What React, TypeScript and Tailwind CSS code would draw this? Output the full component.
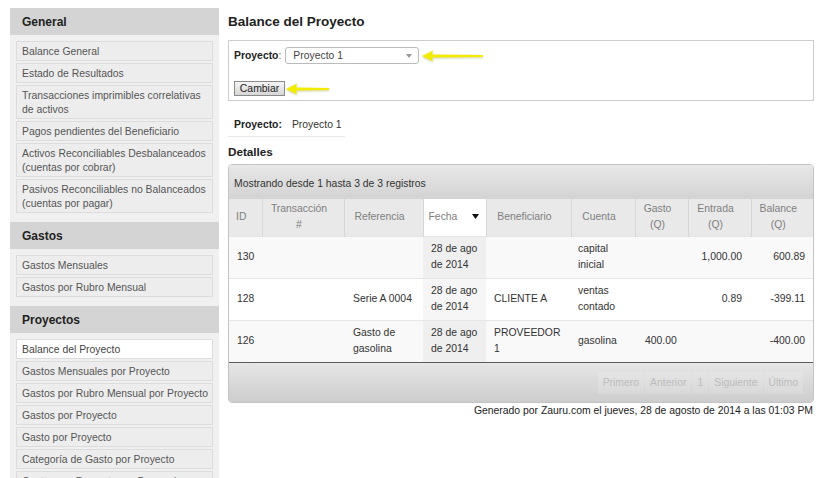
const sections = [
  {
    title: 'General',
    items: [
      'Balance General',
      'Estado de Resultados',
      'Transacciones imprimibles correlativas de activos',
      'Pagos pendientes del Beneficiario',
      'Activos Reconciliables Desbalanceados (cuentas por cobrar)',
      'Pasivos Reconciliables no Balanceados (cuentas por pagar)',
    ],
  },
  {
    title: 'Gastos',
    items: ['Gastos Mensuales', 'Gastos por Rubro Mensual'],
  },
  {
    title: 'Proyectos',
    items: [
      'Balance del Proyecto',
      'Gastos Mensuales por Proyecto',
      'Gastos por Rubro Mensual por Proyecto',
      'Gastos por Proyecto',
      'Gasto por Proyecto',
      'Categoría de Gasto por Proyecto',
      'Gastos por Proyecto por Proveedor',
    ],
  },
];

const rows = [
  { id: '130', ref: '', benef: '', cuenta: 'capital inicial', gasto: '', entrada: '1,000.00', balance: '600.89' },
  { id: '128', ref: 'Serie A 0004', benef: 'CLIENTE A', cuenta: 'ventas contado', gasto: '', entrada: '0.89', balance: '-399.11' },
  { id: '126', ref: 'Gasto de gasolina', benef: 'PROVEEDOR 1', cuenta: 'gasolina', gasto: '400.00', entrada: '', balance: '-400.00' },
];

function YellowArrow({ width }: { width: number }) {
  return (
    <svg width={width} height="14" viewBox={`0 0 ${width} 14`} className="shrink-0 drop-shadow-[0_1px_1px_rgba(120,120,0,0.35)]">
      <polygon points={`1,7 12,1.5 11,5.5 ${width - 2},6 ${width - 2},8 11,8.5 12,12.5`} fill="#f2ec00" />
    </svg>
  );
}

function Sidebar() {
  return (
    <aside className="w-[209px] shrink-0 bg-[#f0f0f0]">
      {sections.map((s) => (
        <div key={s.title}>
          <div className="flex h-[27px] items-center bg-[#d4d4d4] pl-3 text-[12px] font-bold text-[#222]">
            {s.title}
          </div>
          <ul className="flex flex-col gap-[2px] px-[6px] pt-[6px] pb-[9px]">
            {s.items.map((item) => (
              <li
                key={item}
                className={
                  item === 'Balance del Proyecto'
                    ? 'border border-[#dcdcdc] bg-white pl-[5px] pr-[2px] pt-[3px] pb-px text-[10.4px] leading-[14px] text-[#444]'
                    : 'border border-[#dcdcdc] bg-[#ededed] pl-[5px] pr-[2px] pt-[3px] pb-px text-[10.4px] leading-[14px] text-[#555]'
                }
              >
                {item}
              </li>
            ))}
          </ul>
        </div>
      ))}
    </aside>
  );
}

export default function App() {
  const th = 'border-x border-[#d8d8d8] pl-[4px] pr-[12px] text-center align-middle font-normal text-[#808080]';
  return (
    <div className="min-h-screen bg-white font-['Liberation_Sans',Arial,sans-serif] text-[10.4px] text-[#333]">
      <div className="flex items-start pt-2 pl-[10px]">
        <Sidebar />

        <main className="ml-[9px] w-[586px]">
          <h1 className="text-[13.5px] font-bold leading-[28px] text-[#222]">Balance del Proyecto</h1>

          {/* Form */}
          <div className="mt-[4px] border border-[#cccccc] pl-[5px] pt-[6px] pb-[4px]">
            <div className="flex h-[17px] items-center">
              <span className="font-bold text-[#222]">Proyecto</span>
              <span className="text-[#666]">:</span>
              <div className="ml-[4px] flex h-[17px] w-[134px] items-center justify-between rounded-[3px] border border-[#bbbbbb] bg-white pl-[7px] pr-[6px] text-[#444]">
                <span>Proyecto 1</span>
                <svg width="6" height="4" viewBox="0 0 6 4">
                  <polygon points="0,0 6,0 3,4" fill="#999" />
                </svg>
              </div>
              <div className="ml-[2px]">
                <YellowArrow width={64} />
              </div>
            </div>
            <div className="mt-[17px] flex items-center">
              <button className="h-[15px] w-[51px] border border-[#8a8a8a] bg-linear-to-b from-[#f5f5f5] to-[#d6d6d6] text-[10.4px] leading-[13px] text-[#222]">
                Cambiar
              </button>
              <YellowArrow width={46} />
            </div>
          </div>

          <div className="mt-[17px] w-[117px] border-b border-[#e8e8e8] pb-[4px] pl-[6px] leading-[14px]">
            <span className="font-bold text-[#222]">Proyecto:</span>
            <span className="ml-[10px]">Proyecto 1</span>
          </div>

          <h2 className="mt-[7px] text-[11.7px] font-bold leading-[16px] text-[#222]">Detalles</h2>

          {/* Table */}
          <div className="mt-[4px] overflow-hidden rounded-[4px] border border-[#c4c4c4]">
            <div className="h-[34px] bg-linear-to-b from-[#e8e8e8] to-[#d3d3d3] pl-[5px] pt-[12px] leading-[14px] text-[#333]">
              Mostrando desde 1 hasta 3 de 3 registros
            </div>
            <table className="w-full table-fixed leading-[16px]">
              <colgroup>
                <col className="w-[33px]" />
                <col className="w-[82px]" />
                <col className="w-[79px]" />
                <col className="w-[63px]" />
                <col className="w-[85px]" />
                <col className="w-[64px]" />
                <col className="w-[53px]" />
                <col className="w-[63px]" />
                <col />
              </colgroup>
              <thead>
                <tr className="h-[37px] bg-[#e9e9e9]">
                  <th className={th + ' border-l-0'}>ID</th>
                  <th className={th}>
                    Transacción
                    <br />#
                  </th>
                  <th className={th}>Referencia</th>
                  <th className="relative border-x border-[#d8d8d8] bg-white pl-[5px] text-left align-middle font-normal text-[#808080]">
                    Fecha
                    <svg width="7" height="5" viewBox="0 0 7 5" className="absolute top-[15px] right-[7px]">
                      <polygon points="0,0 7,0 3.5,5" fill="#111" />
                    </svg>
                  </th>
                  <th className={th}>Beneficiario</th>
                  <th className={th}>Cuenta</th>
                  <th className={th}>
                    Gasto
                    <br />
                    (Q)
                  </th>
                  <th className={th}>
                    Entrada
                    <br />
                    (Q)
                  </th>
                  <th className={th + ' border-r-0'}>
                    Balance
                    <br />
                    (Q)
                  </th>
                </tr>
              </thead>
              <tbody>
                {rows.map((r, i) => (
                  <tr
                    key={r.id}
                    className={
                      i % 2 === 0
                        ? 'h-[42px] border-t border-[#e6e6e6] bg-[#f9f9f9]'
                        : 'h-[42px] border-t border-[#e6e6e6] bg-white'
                    }
                  >
                    <td className="pl-[8px] align-middle">{r.id}</td>
                    <td />
                    <td className="pl-[9px] pr-[6px] align-middle">{r.ref}</td>
                    <td className={i % 2 === 0 ? 'bg-[#efefef] pl-[8px] align-middle' : 'bg-[#f6f6f6] pl-[8px] align-middle'}>
                      28 de ago de 2014
                    </td>
                    <td className="pl-[8px] pr-[8px] align-middle">{r.benef}</td>
                    <td className="pl-[7px] pr-[8px] align-middle">{r.cuenta}</td>
                    <td className="pl-[10px] align-middle">{r.gasto}</td>
                    <td className="pr-[9px] text-right align-middle">{r.entrada}</td>
                    <td className="pr-[8px] text-right align-middle">{r.balance}</td>
                  </tr>
                ))}
              </tbody>
            </table>
            <div className="flex h-[40px] items-center justify-end border-t border-[#5a5a5a] bg-linear-to-b from-[#e6e6e6] to-[#cdcdcd] pr-[10px]">
              {['Primero', 'Anterior', '1', 'Siguiente', 'Último'].map((p) => (
                <span key={p} className="ml-[1px] bg-white/15 px-[5px] py-[4px] leading-[14px] text-[#bcbcbc]">
                  {p}
                </span>
              ))}
            </div>
          </div>

          <p className="mt-[1px] pr-px text-right leading-[14px] text-[#222]">
            Generado por Zauru.com el jueves, 28 de agosto de 2014 a las 01:03 PM
          </p>
        </main>
      </div>
    </div>
  );
}
